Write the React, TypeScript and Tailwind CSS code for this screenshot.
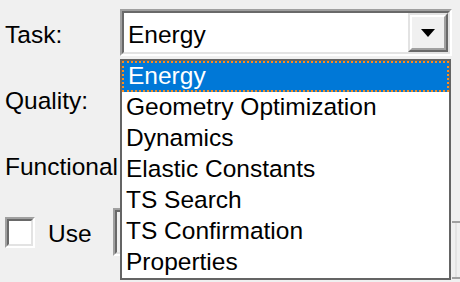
import React from 'react';

const opciones = [
  'Energy',
  'Geometry Optimization',
  'Dynamics',
  'Elastic Constants',
  'TS Search',
  'TS Confirmation',
  'Properties',
];

// Borde hundido estilo Windows clásico
const Hundido: React.FC<{ className?: string; innerClassName?: string; children?: React.ReactNode }> = ({
  className = '',
  innerClassName = '',
  children,
}) => (
  <div className={`border-2 border-t-[#a0a0a0] border-l-[#a0a0a0] border-r-white border-b-white ${className}`}>
    <div className={`h-full w-full border-2 border-t-[#696969] border-l-[#696969] border-r-[#e3e3e3] border-b-[#e3e3e3] ${innerClassName}`}>
      {children}
    </div>
  </div>
);

const App: React.FC = () => {
  const seleccionada = 0;

  return (
    <div className="relative w-[460px] h-[282px] overflow-hidden bg-[#f0f0f0] text-black text-[24.5px] leading-none font-['Liberation_Sans',Arial,sans-serif]">
      <div className="flex flex-col pt-[9px]">
        {/* Task */}
        <div className="flex h-[47px]">
          <div className="w-[120px] pl-[5px] pt-[14px]">Task:</div>
          <Hundido className="w-[332px] h-[47px]" innerClassName="flex bg-white">
            <div className="flex-1 pl-[4px] pt-[10px]">Energy</div>
            <div className="w-[40px] h-full border-2 border-t-[#e3e3e3] border-l-[#e3e3e3] border-r-[#696969] border-b-[#696969]">
              <div className="h-full w-full flex items-center justify-center bg-[#f0f0f0] border-2 border-t-white border-l-white border-r-[#a0a0a0] border-b-[#a0a0a0]">
                <svg width="14" height="8" viewBox="0 0 14 8" className="mt-[1px]">
                  <polygon points="0,0 14,0 7,8" fill="#000" />
                </svg>
              </div>
            </div>
          </Hundido>
        </div>

        {/* Quality */}
        <div className="h-[66px] pl-[5px] pt-[33px]">Quality:</div>

        {/* Functional */}
        <div className="h-[66px] pl-[5px] pt-[33px]">Functional</div>

        {/* Use */}
        <div className="flex h-[94px] items-start">
          <Hundido className="ml-[5px] mt-[29px] w-[30px] h-[31px]" innerClassName="bg-white" />
          <div className="ml-[13px] mt-[34px]">Use</div>
          <Hundido className="ml-[21px] mt-[20px] w-[330px] h-[48px]" innerClassName="bg-[#f0f0f0]" />
        </div>
      </div>

      {/* control a la derecha, casi oculto */}
      <div className="absolute left-[452px] top-[221px] w-[20px] h-[58px] border-t-2 border-b-2 border-[#a0a0a0]">
        <div className="ml-[3px] h-full w-[2px] bg-[#e3e3e3]" />
      </div>

      {/* Lista desplegada */}
      <div className="absolute left-[120px] top-[59px] w-[331px] bg-white border-2 border-[#646464]">
        {opciones.map((op, i) => (
          <div
            key={op}
            className={
              i === seleccionada
                ? 'h-[31px] pl-[4px] flex items-center bg-[#0078d7] text-white border-2 border-dotted border-[#ff8c1a]'
                : 'h-[31px] pl-[4px] flex items-center'
            }
          >
            {op}
          </div>
        ))}
      </div>
    </div>
  );
};

export default App;
